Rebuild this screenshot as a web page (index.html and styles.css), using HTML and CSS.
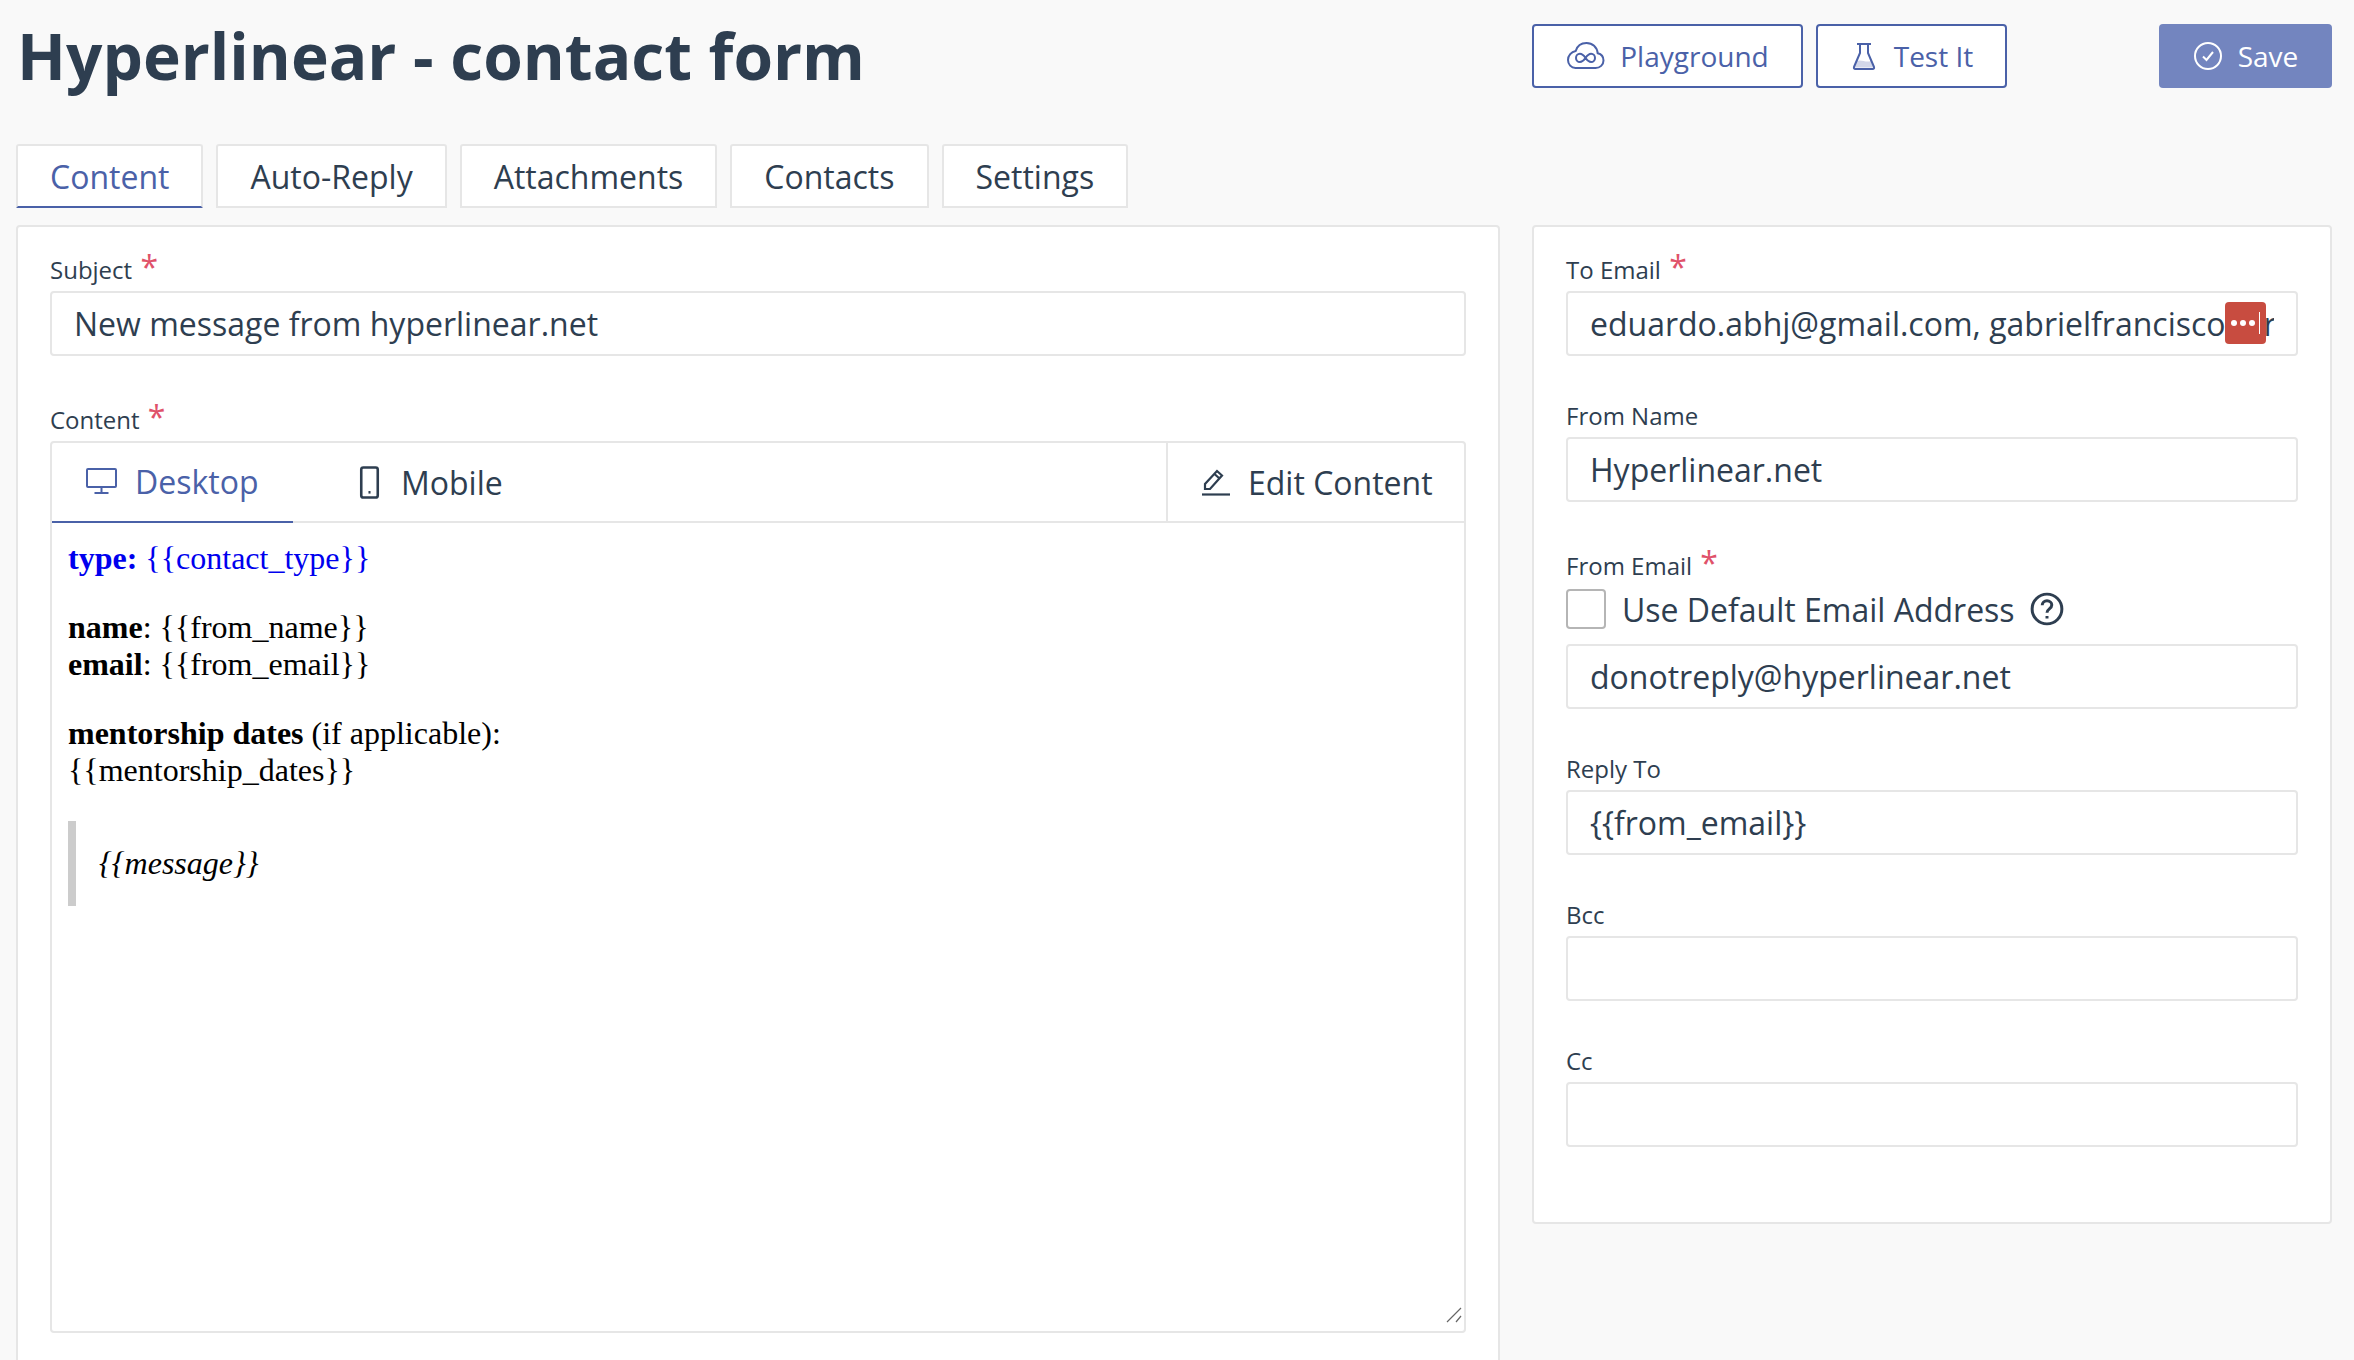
FILE: index.html
```html
<!DOCTYPE html>
<html lang="en">

<head>
    <meta charset="UTF-8">
    <title>Hyperlinear - contact form</title>
    <link rel="stylesheet" href="styles.css">
</head>

<body>
    <header class="top">
        <h1>Hyperlinear - contact form</h1>
        <div class="top-actions">
            <a class="btn btn-line btn-play">
                <svg class="icon-play" viewBox="0 0 38 30" fill="none" stroke="currentColor" stroke-width="2">
                    <path d="M9 27h20c4.500 0 8-3.200 8-7.500 0-3.600-2.500-6.400-5.800-7.200C30.500 6 26 2 20 2c-5.300 0-9.400 3.300-10.800 8C4.800 10.800 1.500 14.500 1.500 19c0 4.500 3.300 8 7.500 8z" />
                    <path d="M19 17c-2-3-3.500-4.200-5.600-4.200-2.200 0-3.900 1.800-3.900 4.100s1.700 4.100 3.900 4.100c2.100 0 3.600-1.100 5.600-4s3.500-4.200 5.600-4.200c2.200 0 3.900 1.800 3.900 4.100s-1.700 4.100-3.900 4.100c-2.100 0-3.600-1.200-5.600-4z" />
                </svg>
                Playground
            </a>
            <a class="btn btn-line btn-test">
                <svg class="icon-flask" viewBox="0 0 24 28" fill="none" stroke="currentColor" stroke-width="2">
                    <path d="M5 2h14M8 2v9L2 25c-.4 1 .2 2 1.300 2h17.400c1.100 0 1.700-1 1.300-2l-6-14V2" />
                    <path d="M5 19c4-2 9 2 14 0l2 6.500H3z" fill="currentColor" stroke="none" opacity=".25" />
                </svg>
                Test It
            </a>
            <a class="btn btn-save">
                <svg class="icon-check" viewBox="0 0 30 30" fill="none" stroke="currentColor" stroke-width="2">
                    <circle cx="15" cy="15" r="13" />
                    <path d="M10 15.500l3.500 3.500 6.500-8" />
                </svg>
                Save
            </a>
        </div>
    </header>

    <nav class="tabs">
        <a class="tab active">Content</a>
        <a class="tab">Auto-Reply</a>
        <a class="tab">Attachments</a>
        <a class="tab">Contacts</a>
        <a class="tab">Settings</a>
    </nav>

    <main class="columns">
        <section class="panel panel-main">
            <div class="field field-subject">
                <label>Subject <span class="req">*</span></label>
                <div class="input">New message from hyperlinear.net</div>
            </div>

            <div class="field">
                <label>Content <span class="req">*</span></label>
                <div class="editor">
                    <div class="editor-head">
                        <a class="editor-tab active">
                            <svg class="icon-desktop" viewBox="0 0 32 28" fill="none" stroke="currentColor" stroke-width="2">
                                <rect x="1.500" y="2" width="29" height="18" rx="1" />
                                <path d="M16 20v6M9 26h14" />
                            </svg>
                            Desktop
                        </a>
                        <a class="editor-tab">
                            <svg class="icon-mobile" viewBox="0 0 20 32" fill="none" stroke="currentColor" stroke-width="2.500">
                                <rect x="2" y="1.500" width="16" height="29" rx="2" />
                                <path d="M9 25.500h2" />
                            </svg>
                            Mobile
                        </a>
                        <a class="editor-edit">
                            <svg class="icon-pen" viewBox="0 0 30 28" fill="none" stroke="currentColor" stroke-width="2.200">
                                <path d="M4 21v-5L16 3l5 4.500L9 21zM13.500 6l5 4.500" />
                                <path d="M1 26.500h28" />
                            </svg>
                            Edit Content
                        </a>
                    </div>
                    <div class="editor-body">
                        <p class="blue"><b>type:</b> {{contact_type}}</p>
                        <p><b>name</b>: {{from_name}}<br><b>email</b>: {{from_email}}</p>
                        <p><b>mentorship dates</b> (if applicable):<br>{{mentorship_dates}}</p>
                        <blockquote><i>{{message}}</i></blockquote>
                        <svg class="grip" viewBox="0 0 16 16" fill="none" stroke="#666" stroke-width="1.200">
                            <path d="M1 15L15 1M10 15l5-6" />
                        </svg>
                    </div>
                </div>
            </div>
        </section>

        <aside class="panel panel-side">
            <div class="field">
                <label>To Email <span class="req">*</span></label>
                <div class="input input-to">
                    <span class="clip">eduardo.abhj@gmail.com, gabrielfrancisco.mr</span>
                    <span class="dots"><i></i><i></i><i></i><b></b></span>
                </div>
            </div>
            <div class="field">
                <label>From Name</label>
                <div class="input">Hyperlinear.net</div>
            </div>
            <div class="field field-from">
                <label>From Email <span class="req">*</span></label>
                <div class="check-row">
                    <span class="checkbox"></span>
                    Use Default Email Address
                    <svg class="icon-help" viewBox="0 0 32 32" fill="none" stroke="currentColor" stroke-width="2.800">
                        <circle cx="16" cy="16" r="14" />
                        <path d="M11.500 12.500c0-2.500 2-4.200 4.500-4.200s4.500 1.700 4.500 4c0 3.700-4.500 3.600-4.500 7.200M16 22.500v2.500" />
                    </svg>
                </div>
                <div class="input">donotreply@hyperlinear.net</div>
            </div>
            <div class="field">
                <label>Reply To</label>
                <div class="input">{{from_email}}</div>
            </div>
            <div class="field">
                <label>Bcc</label>
                <div class="input"></div>
            </div>
            <div class="field">
                <label>Cc</label>
                <div class="input"></div>
            </div>
        </aside>
    </main>
</body>

</html>
```

FILE: styles.css
```css
* {
    padding: 0;
    margin: 0;
    box-sizing: border-box;
}

html,
body {
    height: 100%;
    overflow: hidden;
}

body {
    background-color: #f9f9f9;
    color: #2e3e50;
    font-family: "Open Sans", "Noto Sans", sans-serif;
    padding: 0 22px 0 16px;
}

svg {
    flex: none;
}

/* top bar */
.top {
    display: flex;
    height: 144px;
    padding-top: 24px;
    align-items: flex-start;
}

h1 {
    font-size: 64px;
    font-weight: 700;
    line-height: 64px;
    width: 1516px;
    padding-left: 1px;
}

.top-actions {
    display: flex;
    flex: 1;
    gap: 13px;
}

.btn {
    display: flex;
    align-items: center;
    justify-content: center;
    height: 64px;
    font-size: 28px;
    border-radius: 4px;
}

.btn-line {
    background-color: #fff;
    border: 2px solid #4a61a8;
    color: #4a61a8;
}

.btn-play {
    width: 271px;
    gap: 15px;
}

.btn-test {
    width: 191px;
    gap: 18px;
    padding-left: 2px;
}

.btn-save {
    width: 173px;
    margin-left: auto;
    gap: 15px;
    background-color: #7385bf;
    color: #fff;
}

.icon-play {
    width: 39px;
    height: 30px;
}

.icon-flask {
    width: 24px;
    height: 28px;
}

.icon-check {
    width: 30px;
    height: 30px;
}

/* tabs */
.tabs {
    display: flex;
    gap: 13px;
    height: 64px;
}

.tab {
    display: flex;
    align-items: center;
    padding: 0 32px;
    background-color: #fff;
    border: 2px solid #e6e6e6;
    font-size: 32px;
    border-radius: 3px 3px 0 0;
}

.tab.active {
    color: #4a61a8;
    border-bottom-color: #4a61a8;
}

/* panels */
.columns {
    display: flex;
    gap: 32px;
    margin-top: 17px;
    align-items: flex-start;
}

.panel {
    background-color: #fff;
    border: 2px solid #e6e6e6;
    border-radius: 4px;
}

.panel-main {
    flex: none;
    width: 1484px;
    height: 1200px;
    padding: 25px 32px 0;
}

.panel-side {
    flex: 1;
    min-width: 0;
    height: 999px;
    padding: 25px 32px 0;
}

/* form */
.field {
    margin-bottom: 42px;
}

.field-subject {
    margin-bottom: 46px;
}

.field-from {
    margin-top: 43px;
}

.field-from label {
    line-height: 42px;
}

label {
    display: block;
    height: 39px;
    font-size: 24px;
    line-height: 36px;
}

.req {
    color: #e0526a;
    font-size: 32px;
    line-height: 20px;
    margin-left: 2px;
}

.input {
    height: 65px;
    padding: 0 22px;
    border: 2px solid #e6e6e6;
    border-radius: 4px;
    background-color: #fff;
    font-size: 32px;
    line-height: 61px;
    white-space: nowrap;
    overflow: hidden;
}

.input-to {
    position: relative;
}

.clip {
    display: block;
    overflow: hidden;
}

.dots {
    position: absolute;
    top: 9px;
    right: 30px;
    display: flex;
    align-items: center;
    justify-content: center;
    gap: 3px;
    width: 41px;
    height: 42px;
    border-radius: 4px;
    background-color: #c84c40;
}

.dots i {
    width: 6px;
    height: 6px;
    border-radius: 50%;
    background-color: #fff;
}

.dots b {
    width: 1px;
    height: 22px;
    margin-left: 1px;
    background-color: #fff;
}

.check-row {
    display: flex;
    align-items: center;
    height: 42px;
    margin: 4px 0 14px;
    font-size: 32px;
}

.checkbox {
    width: 40px;
    height: 40px;
    margin-right: 16px;
    border: 2px solid #b5b5b5;
    border-radius: 4px;
    background-color: #fff;
}

.icon-help {
    width: 34px;
    height: 34px;
    margin-left: 15px;
}

/* editor */
.editor {
    height: 892px;
    border: 2px solid #e6e6e6;
    border-radius: 4px;
    display: flex;
    flex-direction: column;
}

.editor-head {
    display: flex;
    height: 80px;
    flex: none;
    border-bottom: 2px solid #e6e6e6;
    font-size: 32px;
}

.editor-tab {
    display: flex;
    align-items: center;
    gap: 17px;
    margin-bottom: -2px;
    padding-bottom: 2px;
}

.editor-tab.active {
    width: 241px;
    padding-left: 33px;
    color: #4a61a8;
    border-bottom: 2px solid #4a61a8;
}

.editor-tab + .editor-tab {
    margin-left: 66px;
    gap: 21px;
}

.editor-edit {
    display: flex;
    align-items: center;
    gap: 17px;
    margin-left: auto;
    width: 298px;
    padding-left: 33px;
    border-left: 2px solid #e6e6e6;
}

.icon-desktop {
    width: 33px;
    height: 28px;
}

.icon-mobile {
    width: 21px;
    height: 33px;
}

.icon-pen {
    width: 30px;
    height: 28px;
}

.editor-body {
    position: relative;
    flex: 1;
    padding: 17px 16px 0;
    color: #000;
    font-family: "Liberation Serif", serif;
    font-size: 32px;
    line-height: 37px;
}

.editor-body p {
    margin-bottom: 32px;
}

.blue {
    color: #0000ee;
}

blockquote {
    height: 85px;
    padding-left: 23px;
    border-left: 8px solid #ccc;
    line-height: 85px;
}

.grip {
    position: absolute;
    right: 2px;
    bottom: 8px;
    width: 16px;
    height: 16px;
}
```
